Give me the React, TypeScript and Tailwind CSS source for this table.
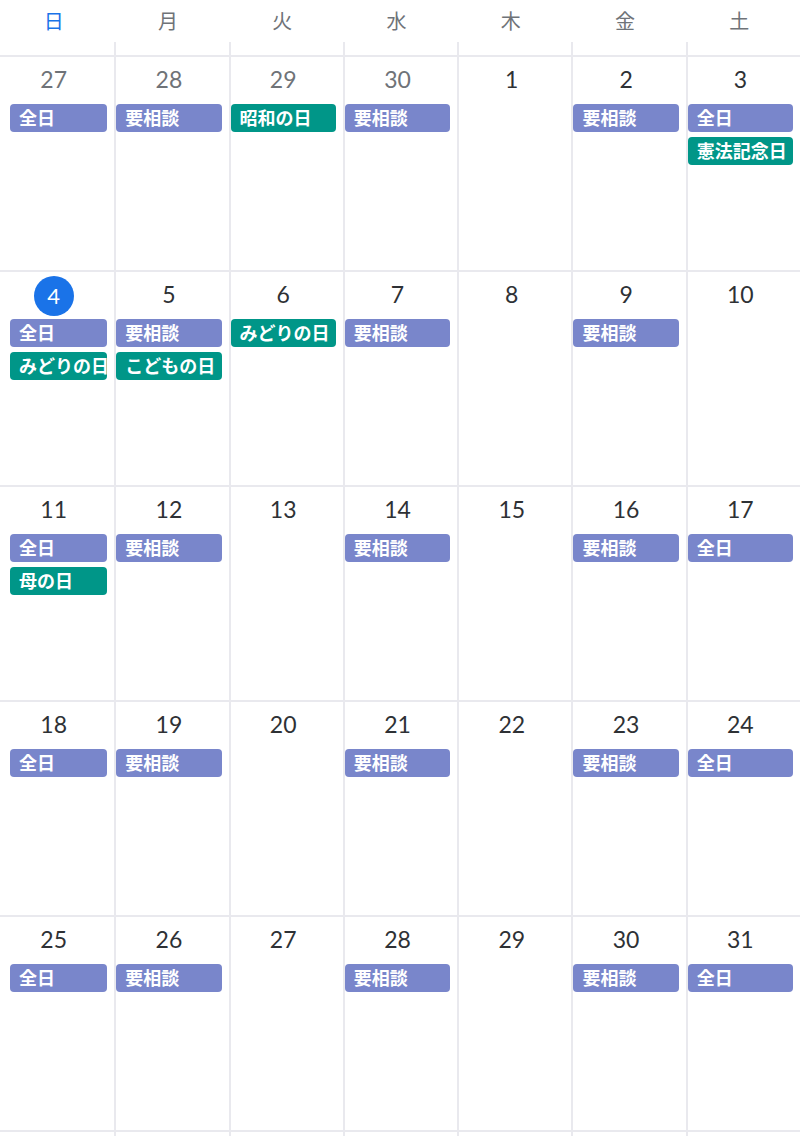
import React from 'react'

type Ev = { label: string; kind: 'p' | 'g' }
type Day = { n: number; muted?: boolean; today?: boolean; events: Ev[] }

const ZEN: Ev = { label: '全日', kind: 'p' }
const SOU: Ev = { label: '要相談', kind: 'p' }
const hol = (label: string): Ev => ({ label, kind: 'g' })

const weekdays = ['日', '月', '火', '水', '木', '金', '土']

const weeks: Day[][] = [
  [
    { n: 27, muted: true, events: [ZEN] },
    { n: 28, muted: true, events: [SOU] },
    { n: 29, muted: true, events: [hol('昭和の日')] },
    { n: 30, muted: true, events: [SOU] },
    { n: 1, events: [] },
    { n: 2, events: [SOU] },
    { n: 3, events: [ZEN, hol('憲法記念日')] },
  ],
  [
    { n: 4, today: true, events: [ZEN, hol('みどりの日')] },
    { n: 5, events: [SOU, hol('こどもの日')] },
    { n: 6, events: [hol('みどりの日')] },
    { n: 7, events: [SOU] },
    { n: 8, events: [] },
    { n: 9, events: [SOU] },
    { n: 10, events: [] },
  ],
  [
    { n: 11, events: [ZEN, hol('母の日')] },
    { n: 12, events: [SOU] },
    { n: 13, events: [] },
    { n: 14, events: [SOU] },
    { n: 15, events: [] },
    { n: 16, events: [SOU] },
    { n: 17, events: [ZEN] },
  ],
  [
    { n: 18, events: [ZEN] },
    { n: 19, events: [SOU] },
    { n: 20, events: [] },
    { n: 21, events: [SOU] },
    { n: 22, events: [] },
    { n: 23, events: [SOU] },
    { n: 24, events: [ZEN] },
  ],
  [
    { n: 25, events: [ZEN] },
    { n: 26, events: [SOU] },
    { n: 27, events: [] },
    { n: 28, events: [SOU] },
    { n: 29, events: [] },
    { n: 30, events: [SOU] },
    { n: 31, events: [ZEN] },
  ],
]

const font = { fontFamily: 'Lato, "Noto Sans CJK JP", sans-serif' }

function DayCell({ day, col }: { day: Day; col: number }) {
  return (
    <div className={`h-[213px] pt-[1px] pr-[7px] flex flex-col overflow-hidden ${col > 0 ? 'border-l-2 border-[#e9e9ee]' : ''}`}>
      <div className="h-[42px] flex items-center justify-center">
        {day.today ? (
          <span className="w-[40px] h-[40px] mt-[3px] rounded-full bg-[#1a73e8] text-white text-[22px] flex items-center justify-center">
            {day.n}
          </span>
        ) : (
          <span className={`text-[23px] leading-none ${day.muted ? 'text-[#6f7378]' : 'text-[#2e3135]'}`}>{day.n}</span>
        )}
      </div>
      <div className={`mt-[4px] flex flex-col gap-[5px] ${col === 0 ? 'ml-[10px]' : ''}`}>
        {day.events.map((e, i) => (
          <div
            key={i}
            className={`h-[28px] rounded-[4px] pl-[9px] flex items-center text-white text-[18px] font-semibold whitespace-nowrap overflow-hidden ${
              e.kind === 'p' ? 'bg-[#7986cb]' : 'bg-[#009688]'
            }`}
          >
            {e.label}
          </div>
        ))}
      </div>
    </div>
  )
}

export default function App() {
  return (
    <div className="w-[800px] h-[1136px] overflow-hidden bg-white" style={font}>
      {/* weekday header */}
      <div className="grid grid-cols-7 h-[57px] border-b-2 border-[#e9e9ee]">
        {weekdays.map((w, i) => (
          <div key={w} className="flex flex-col">
            <div className={`h-[42px] pr-[7px] flex items-center justify-center text-[20px] ${i === 0 ? 'text-[#1a73e8]' : 'text-[#6f7378]'}`}>
              {w}
            </div>
            <div className={`flex-1 ${i > 0 ? 'border-l-2 border-[#e9e9ee]' : ''}`} />
          </div>
        ))}
      </div>

      {weeks.map((wk, r) => (
        <div key={r} className="grid grid-cols-7 border-b-2 border-[#e9e9ee]">
          {wk.map((d, c) => (
            <DayCell key={c} day={d} col={c} />
          ))}
        </div>
      ))}

      {/* next row peeking */}
      <div className="grid grid-cols-7 h-[20px]">
        {weekdays.map((w, i) => (
          <div key={w} className={i > 0 ? 'border-l-2 border-[#e9e9ee]' : ''} />
        ))}
      </div>
    </div>
  )
}
